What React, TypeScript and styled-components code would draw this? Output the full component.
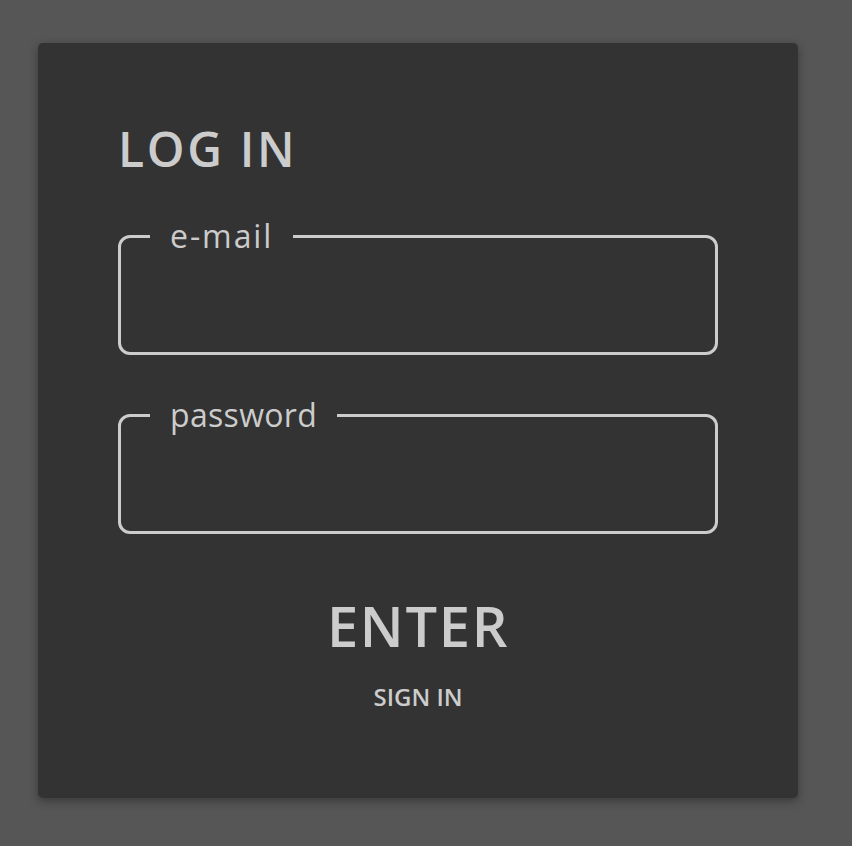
import React from "react";
import styled, { createGlobalStyle } from "styled-components";

const Global = createGlobalStyle`
  html, body { margin: 0; padding: 0; background: #565656; }
  body { font-family: "Open Sans", "Noto Sans", sans-serif; color: #cccccc; }
  * { box-sizing: border-box; }
`;

const Page = styled.div`
  min-height: 846px;
  padding: 43px 38px;
`;

const Card = styled.form`
  width: 760px;
  background: #333333;
  border-radius: 5px;
  box-shadow: 0 3px 10px rgba(0, 0, 0, 0.35);
  padding: 82px 80px 89px;
  display: flex;
  flex-direction: column;
`;

const Title = styled.h1`
  margin: 0 0 45px;
  font-size: 48px;
  line-height: 48px;
  font-weight: 600;
  letter-spacing: 0.055em;
  color: #cccccc;
`;

const Field = styled.fieldset<{ $last?: boolean }>`
  margin: 0 0 ${(p) => (p.$last ? "63px" : "42px")};
  padding: 0 29px 16px;
  border: 3px solid #cccccc;
  border-radius: 12px;
  min-width: 0;
`;

const Legend = styled.legend<{ $spacing?: string }>`
  padding: 0 20px;
  font-size: 32px;
  line-height: 36px;
  font-weight: 500;
  letter-spacing: ${(p) => p.$spacing ?? "0.01em"};
  color: #cccccc;
`;

const Input = styled.input`
  display: block;
  width: 100%;
  height: 82px;
  background: transparent;
  border: none;
  outline: none;
  color: #cccccc;
  font-family: inherit;
  font-size: 28px;
`;

const Actions = styled.div`
  display: flex;
  flex-direction: column;
  align-items: center;
  gap: 32px;
`;

const EnterButton = styled.button`
  background: none;
  border: none;
  padding: 0;
  font-family: inherit;
  font-size: 56px;
  line-height: 56px;
  font-weight: 600;
  letter-spacing: 0.03em;
  color: #cccccc;
  cursor: pointer;
`;

const SignLink = styled.a`
  font-size: 24px;
  line-height: 24px;
  font-weight: 600;
  color: #cccccc;
  text-decoration: none;
  cursor: pointer;
`;

export default function App() {
  return (
    <>
      <Global />
      <Page>
        <Card onSubmit={(e) => e.preventDefault()}>
          <Title>LOG IN</Title>
          <Field>
            <Legend $spacing="0.06em">e-mail</Legend>
            <Input type="email" />
          </Field>
          <Field $last>
            <Legend>password</Legend>
            <Input type="password" />
          </Field>
          <Actions>
            <EnterButton type="submit">ENTER</EnterButton>
            <SignLink>SIGN IN</SignLink>
          </Actions>
        </Card>
      </Page>
    </>
  );
}
